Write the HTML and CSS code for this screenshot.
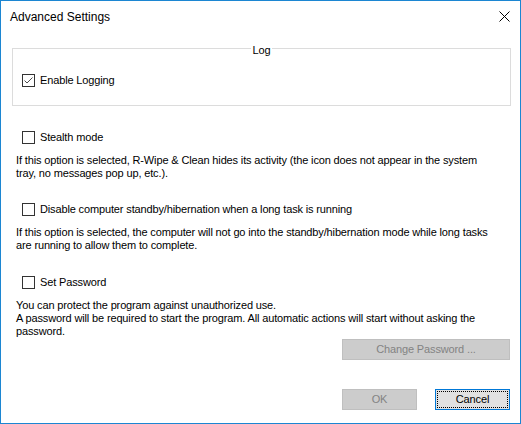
FILE: index.html
```html
<!DOCTYPE html>
<html>
<head>
<meta charset="utf-8">
<title>Advanced Settings</title>
<link rel="stylesheet" href="styles.css">
</head>
<body>
<div class="window">
  <div class="titlebar">
    <span class="title">Advanced Settings</span>
    <svg class="close" width="11" height="11" viewBox="0 0 11 11"><path d="M0.5 0.5 L10.5 10.5 M10.5 0.5 L0.5 10.5" stroke="#000" stroke-width="1" fill="none"/></svg>
  </div>
  <div class="content">
    <div class="group">
      <div class="legend">Log</div>
      <div class="check row-log">
        <span class="box"><svg width="11" height="11" viewBox="0 0 11 11"><polyline points="1.5,5.5 4,8 9.5,2.5" fill="none" stroke="#4d4d4d" stroke-width="1"/></svg></span>
        <span class="label">Enable Logging</span>
      </div>
    </div>

    <div class="check row-stealth">
      <span class="box"></span>
      <span class="label">Stealth mode</span>
    </div>
    <p class="desc">If this option is selected, R-Wipe &amp; Clean hides its activity (the icon does not appear in the system<br>tray, no messages pop up, etc.).</p>

    <div class="check row-standby">
      <span class="box"></span>
      <span class="label">Disable computer standby/hibernation when a long task is running</span>
    </div>
    <p class="desc">If this option is selected, the computer will not go into the standby/hibernation mode while long tasks<br>are running to allow them to complete.</p>

    <div class="check row-pass">
      <span class="box"></span>
      <span class="label">Set Password</span>
    </div>
    <p class="desc desc-pass">You can protect the program against unauthorized use.<br>A password will be required to start the program. All automatic actions will start without asking the<br>password.</p>

    <div class="btn-row">
      <button class="btn btn-wide" disabled>Change Password ...</button>
    </div>
    <div class="btn-row btn-row-bottom">
      <button class="btn" disabled>OK</button>
      <button class="btn btn-focus"><span class="focus-ring">Cancel</span></button>
    </div>
  </div>
</div>
</body>
</html>
```

FILE: styles.css
```css
html, body {
  margin: 0;
  padding: 0;
  background: #ffffff;
}

.window {
  box-sizing: border-box;
  width: 521px;
  height: 424px;
  border: 1px solid #1c86d2;
  background: #ffffff;
  font-family: "Liberation Sans", Arial, sans-serif;
  font-size: 11px;
  line-height: 13px;
  letter-spacing: -0.14px;
  color: #000000;
  display: flex;
  flex-direction: column;
}

.titlebar {
  height: 30px;
  display: flex;
  align-items: center;
  padding: 0 10px 0 9px;
}

.title {
  font-family: "Liberation Sans", Arial, sans-serif;
  font-size: 12px;
  line-height: 16px;
  letter-spacing: 0;
  color: #000000;
  padding-top: 1px;
}

.close {
  margin-left: auto;
  display: block;
}

.content {
  padding: 0 9px 0 11px;
  display: flex;
  flex-direction: column;
}

.group {
  margin-top: 17px;
  border: 1px solid #dcdcdc;
  height: 56px;
  display: flex;
  flex-direction: column;
}

.legend {
  align-self: center;
  margin-top: -5px;
  padding: 0 2px;
  background: #ffffff;
  height: 13px;
}

.check {
  display: flex;
  align-items: center;
  height: 13px;
  padding-left: 10px;
}

.row-log {
  margin-top: 17px;
  padding-left: 9px;
}

.box {
  box-sizing: border-box;
  width: 13px;
  height: 13px;
  border: 1px solid #333333;
  background: #ffffff;
  display: flex;
  align-items: center;
  justify-content: center;
  flex: none;
}

.box svg {
  display: block;
}

.label {
  margin-left: 5px;
  white-space: nowrap;
}

.row-stealth {
  margin-top: 25px;
}

.row-standby {
  margin-top: 23px;
}

.row-pass {
  margin-top: 24px;
}

.desc {
  margin: 10px 0 0 4px;
  white-space: nowrap;
}

.desc-pass {
  margin-top: 10px;
}

.btn-row {
  display: flex;
  justify-content: flex-end;
  gap: 18px;
  padding-right: 1px;
  margin-top: 1px;
}

.btn-row-bottom {
  margin-top: 29px;
}

.btn {
  box-sizing: border-box;
  width: 75px;
  height: 21px;
  margin: 0;
  padding: 0;
  font-family: "Liberation Sans", Arial, sans-serif;
  font-size: 11px;
  line-height: 13px;
  letter-spacing: -0.14px;
  background: #e1e1e1;
  border: 1px solid #adadad;
  color: #000000;
  display: flex;
  align-items: center;
  justify-content: center;
}

.btn[disabled] {
  background: #cccccc;
  border-color: #bfbfbf;
  color: #838383;
}

.btn-wide {
  width: 168px;
}

.btn-focus {
  border-color: #0078d7;
  padding: 1px;
}

.focus-ring {
  box-sizing: border-box;
  width: 100%;
  height: 100%;
  border: 1px dotted #000000;
  display: flex;
  align-items: center;
  justify-content: center;
}
```
